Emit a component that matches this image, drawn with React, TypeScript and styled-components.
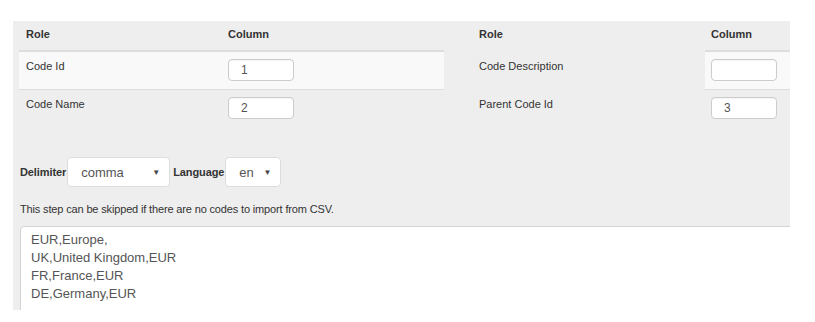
import React from "react";
import styled, { createGlobalStyle } from "styled-components";

const Global = createGlobalStyle`
  html, body { margin: 0; padding: 0; background: #fff; }
  body { font-family: "Liberation Sans", Arial, Helvetica, sans-serif; color: #333; }
  * { box-sizing: border-box; }
`;

const Page = styled.div`
  padding: 21px 25px 0 13px;
`;

const Panel = styled.div`
  width: 777px;
  height: 289px;
  background: #eeeeee;
  padding-left: 6px;
  overflow: hidden;
`;

const Grid = styled.div`
  display: grid;
  grid-template-columns: 201px 224px 261px 85px;
`;

const HeadCell = styled.div<{ $pad: number; $lined: boolean }>`
  height: 31px;
  padding: 7px 8px 0 ${(p) => p.$pad}px;
  font-size: 11px;
  font-weight: bold;
  color: #333;
  border-bottom: 2px solid ${(p) => (p.$lined ? "#dddddd" : "transparent")};
`;

const Cell = styled.div<{ $pad: number; $bg: string; $lined: boolean; $first: boolean }>`
  height: 37px;
  padding: 7px 8px 0 ${(p) => p.$pad}px;
  font-size: 11px;
  color: #333;
  background: ${(p) => p.$bg};
  border-top: ${(p) => (p.$first ? "0" : `1px solid ${p.$lined ? "#dddddd" : "transparent"}`)};
`;

const RoleText = styled.div`
  line-height: 15px;
`;

const NumInput = styled.div`
  width: 66px;
  height: 22px;
  border: 1px solid #cccccc;
  border-radius: 4px;
  background: #fff;
  font-size: 12px;
  line-height: 21px;
  color: #555;
  padding-left: 12px;
  box-shadow: inset 0 1px 1px rgba(0, 0, 0, 0.04);
`;

const Toolbar = styled.div`
  display: flex;
  align-items: center;
  margin: 31px 0 0 1px;
  height: 30px;
`;

const Label = styled.span`
  font-size: 11px;
  font-weight: bold;
  color: #333;
  margin-right: 1px;
  letter-spacing: -0.1px;
`;

const Select = styled.div<{ $w: number }>`
  width: ${(p) => p.$w}px;
  height: 30px;
  background: #fff;
  border: 1px solid #dddddd;
  border-radius: 4px;
  display: flex;
  align-items: center;
  justify-content: space-between;
  padding: 1px 9px 0 13px;
  margin-right: 3px;
  font-size: 13px;
  color: #555;
`;

const Arrow = styled.span`
  font-size: 8px;
  color: #444;
`;

const Help = styled.div`
  margin: 15px 0 0 1px;
  font-size: 11px;
  line-height: 15px;
  letter-spacing: -0.15px;
  color: #333;
`;

const Area = styled.textarea`
  display: block;
  margin: 9px 0 0 1px;
  width: 800px;
  height: 120px;
  border: 1px solid #d4d4d4;
  border-radius: 4px;
  background: #fff;
  padding: 4px 10px;
  font-family: "Liberation Sans", Arial, sans-serif;
  font-size: 13px;
  line-height: 18px;
  color: #555;
  resize: none;
  outline: none;
`;

type Row = { left: string; leftVal: string; right: string; rightVal: string };

const rows: Row[] = [
  { left: "Code Id", leftVal: "1", right: "Code Description", rightVal: "" },
  { left: "Code Name", leftVal: "2", right: "Parent Code Id", rightVal: "3" },
];

const pads = [7, 8, 35, 6];
const lined = [true, true, false, true];

export default function App() {
  return (
    <Page>
      <Global />
      <Panel>
        <Grid>
          {["Role", "Column", "Role", "Column"].map((h, i) => (
            <HeadCell key={i} $pad={pads[i]} $lined={lined[i]}>
              {h}
            </HeadCell>
          ))}
          {rows.map((r, ri) => {
            const bg = ri === 0 ? "#f9f9f9" : "transparent";
            const cells = [
              <RoleText>{r.left}</RoleText>,
              <NumInput>{r.leftVal}</NumInput>,
              <RoleText>{r.right}</RoleText>,
              <NumInput>{r.rightVal}</NumInput>,
            ];
            return cells.map((c, ci) => (
              <Cell
                key={`${ri}-${ci}`}
                $pad={pads[ci]}
                $bg={lined[ci] ? bg : "transparent"}
                $lined={lined[ci]}
                $first={ri === 0}
              >
                {c}
              </Cell>
            ));
          })}
        </Grid>
        <Toolbar>
          <Label>Delimiter</Label>
          <Select $w={103}>
            comma <Arrow>▼</Arrow>
          </Select>
          <Label>Language</Label>
          <Select $w={56}>
            en <Arrow>▼</Arrow>
          </Select>
        </Toolbar>
        <Help>This step can be skipped if there are no codes to import from CSV.</Help>
        <Area
          readOnly
          value={"EUR,Europe,\nUK,United Kingdom,EUR\nFR,France,EUR\nDE,Germany,EUR"}
        />
      </Panel>
    </Page>
  );
}
